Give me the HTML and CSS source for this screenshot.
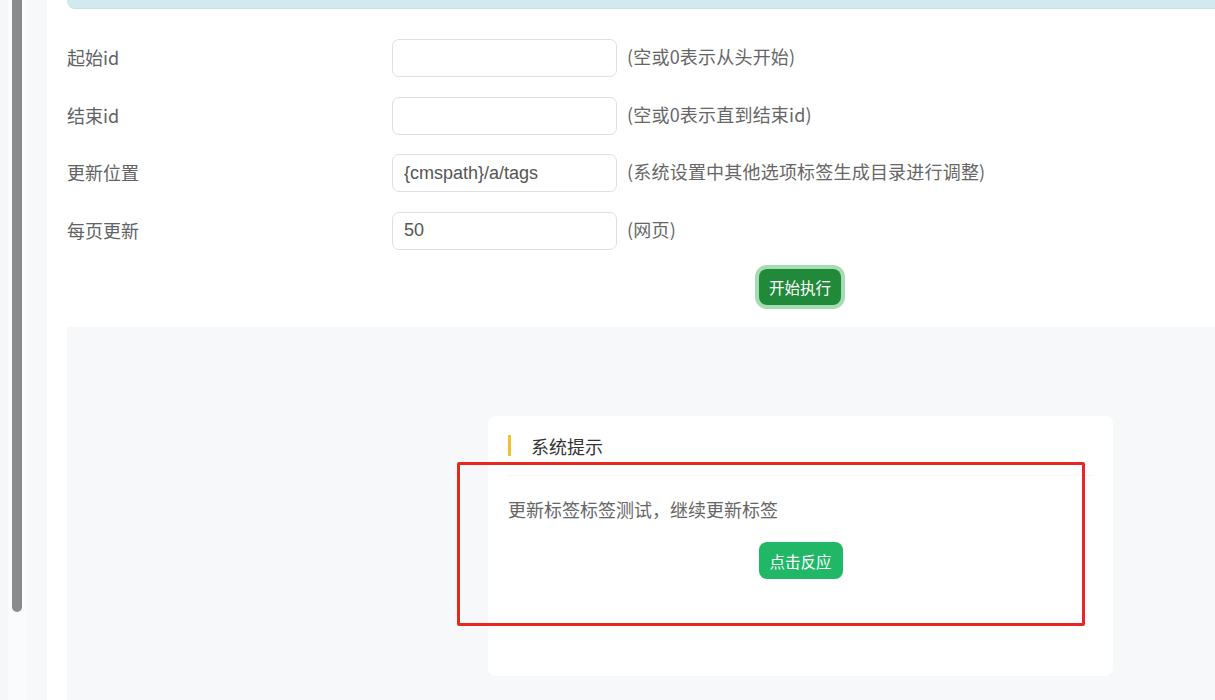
FILE: index.html
```html
<!DOCTYPE html>
<html lang="zh-CN">
<head>
    <meta charset="UTF-8">
    <title>更新标签</title>
    <link rel="stylesheet" href="styles.css">
</head>
<body>
    <div class="gutter">
        <div class="gutter-edge"></div>
        <div class="scroll-track"><div class="scroll-thumb"></div></div>
        <div class="gutter-pad"></div>
        <div class="gutter-shade"></div>
    </div>
    <div class="main">
        <div class="alert"></div>
        <form class="tag-form">
            <div class="row">
                <label class="label">起始id</label>
                <input class="field" type="text" value="">
                <span class="hint">(空或0表示从头开始)</span>
            </div>
            <div class="row">
                <label class="label">结束id</label>
                <input class="field" type="text" value="">
                <span class="hint">(空或0表示直到结束id)</span>
            </div>
            <div class="row">
                <label class="label">更新位置</label>
                <input class="field" type="text" value="{cmspath}/a/tags">
                <span class="hint">(系统设置中其他选项标签生成目录进行调整)</span>
            </div>
            <div class="row">
                <label class="label">每页更新</label>
                <input class="field" type="text" value="50">
                <span class="hint">(网页)</span>
            </div>
            <div class="actions">
                <button type="button" class="btn-run">开始执行</button>
            </div>
        </form>
        <div class="panel">
            <div class="card">
                <div class="card-title">系统提示</div>
                <div class="card-body">
                    <p class="message">更新标签标签测试，继续更新标签</p>
                    <div class="card-actions">
                        <button type="button" class="btn-go">点击反应</button>
                    </div>
                </div>
                <div class="highlight"></div>
            </div>
        </div>
    </div>
</body>
</html>
```

FILE: styles.css
```css
html, body {
    margin: 0;
    height: 100%;
}
body {
    font-family: "Noto Sans CJK SC", "Liberation Sans", sans-serif;
    background-color: #fff;
    display: flex;
    overflow: hidden;
}
.gutter {
    width: 47px;
    display: flex;
    flex-shrink: 0;
}
.gutter-edge {
    width: 8px;
    background-color: #f6f7f9;
}
.scroll-track {
    width: 14px;
    background-color: #fafbfc;
    padding-left: 4px;
    box-sizing: border-box;
}
.scroll-thumb {
    width: 10px;
    height: 612px;
    background-color: #8a8a8a;
    border-radius: 0 0 5px 5px;
}
.gutter-pad {
    width: 5px;
    background-color: #fafbfc;
}
.gutter-shade {
    width: 20px;
    background-color: #f7f8fa;
}
.main {
    flex: 1;
    padding-left: 20px;
    display: flex;
    flex-direction: column;
}
.alert {
    height: 8px;
    flex-shrink: 0;
    background-color: #d2e9f0;
    border-bottom: 1px solid #c4e0e8;
    border-bottom-left-radius: 8px;
}
.tag-form {
    padding-top: 30px;
}
.row {
    display: flex;
    align-items: center;
    height: 38px;
    margin-bottom: 19.6px;
}
.label {
    width: 325px;
    font-size: 18px;
    color: #606266;
    margin-top: -2px;
}
.field {
    width: 225px;
    height: 38px;
    box-sizing: border-box;
    border: 1px solid #dcdfe6;
    border-radius: 7px;
    padding: 0 11px;
    font-family: "Liberation Sans", "Noto Sans CJK SC", sans-serif;
    font-size: 18px;
    color: #555;
    outline: none;
}
.hint {
    margin-left: 10px;
    font-size: 18px;
    letter-spacing: 0.2px;
    color: #666;
    margin-top: -4px;
}
.actions {
    padding: 0 0 22px 692px;
    margin-top: 1px;
}
.btn-run {
    width: 82px;
    height: 36px;
    border: none;
    border-radius: 8px;
    background-color: #218a3a;
    color: #fff;
    font-family: inherit;
    font-size: 15.5px;
    padding: 0;
    box-shadow: 0 0 0 4px #a6dcb2;
}
.panel {
    flex: 1;
    background-color: #f7f8fa;
    padding: 89px 0 0 421px;
}
.card {
    position: relative;
    width: 625px;
    height: 260px;
    box-sizing: border-box;
    background-color: #fff;
    border-radius: 8px;
    padding: 0 20px;
}
.card-title {
    position: relative;
    height: 60px;
    box-sizing: border-box;
    display: flex;
    align-items: center;
    border-bottom: 1px solid #f6f6f7;
    padding-left: 23px;
    font-size: 18px;
    color: #333;
}
.card-title::before {
    content: "";
    position: absolute;
    left: 0;
    top: 19px;
    width: 3px;
    height: 21px;
    background-color: #f5c02d;
}
.message {
    margin: 21px 0 0;
    font-size: 18px;
    line-height: 24px;
    color: #666;
}
.card-actions {
    display: flex;
    justify-content: center;
    margin-top: 21px;
}
.btn-go {
    width: 84px;
    height: 37px;
    border: none;
    border-radius: 8px;
    background-color: #20b866;
    color: #fff;
    font-family: inherit;
    font-size: 15.5px;
    padding: 0;
}
.highlight {
    position: absolute;
    left: -31px;
    top: 46px;
    width: 628px;
    height: 164px;
    box-sizing: border-box;
    border: 3px solid #e8271e;
    border-radius: 2px;
    pointer-events: none;
}
```
